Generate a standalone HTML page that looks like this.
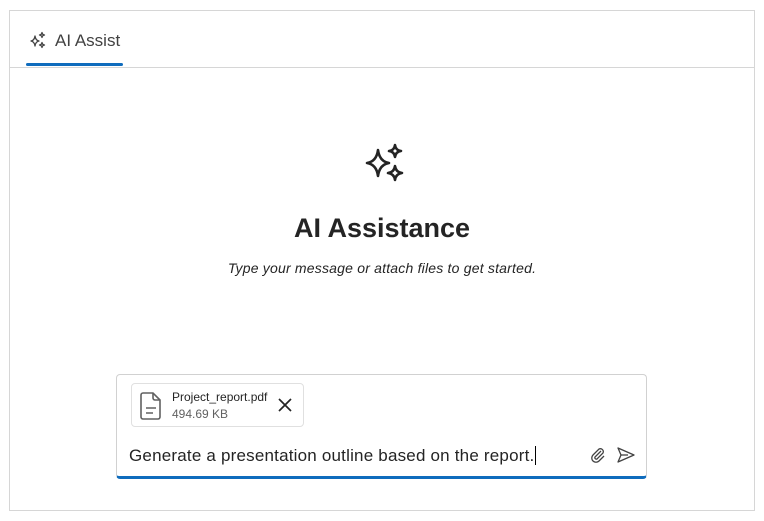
<!DOCTYPE html>
<html><head><style>
body{margin:0;width:764px;height:521px;background:#fff;font-family:"Liberation Sans",sans-serif;position:relative;overflow:hidden;color:#212121}
.frame{position:absolute;left:9px;top:10px;width:744px;height:499px;border:1px solid #d6d6d6}
.hdr{position:absolute;left:0;top:0;right:0;height:56px;border-bottom:1px solid #d6d6d6}
.tab{position:absolute;left:18px;top:20px;font-size:17px;color:#424242;display:flex;align-items:center;gap:7px}
.ul{position:absolute;left:16px;top:52px;width:97px;height:3px;background:#0f6cbd;border-radius:2px}
.title{position:absolute;left:0;right:0;top:213px;text-align:center;font-size:27px;font-weight:bold;color:#242424}
.sub{position:absolute;left:0;right:0;top:260px;text-align:center;font-size:14px;font-style:italic;color:#242424;letter-spacing:0.2px}
.box{position:absolute;left:116px;top:374px;width:529px;height:101px;border:1px solid #d1d1d1;border-bottom:3px solid #0f6cbd;border-radius:4px}
.chip{position:absolute;left:14px;top:8px;width:171px;height:42px;border:1px solid #e0e0e0;border-radius:4px}
.fn{position:absolute;left:40px;top:6px;font-size:12px;color:#242424}
.fs{position:absolute;left:40px;top:23px;font-size:12px;color:#616161}
.txt{position:absolute;left:12px;top:71px;font-size:17px;color:#242424;letter-spacing:0.2px}
</style></head><body>
<div class="frame">
 <div class="hdr">
  <div class="tab"><svg width="20" height="20" viewBox="0 0 20 20" fill="none" stroke="#424242" stroke-width="1.3" stroke-linejoin="round"><path d="M7 5 Q7.6 9.4 11 10 Q7.6 10.6 7 15 Q6.4 10.6 3 10 Q6.4 9.4 7 5Z"/><path d="M14 1.5 Q14.3 3.7 16.5 4 Q14.3 4.3 14 6.5 Q13.7 4.3 11.5 4 Q13.7 3.7 14 1.5Z"/><path d="M14 11.5 Q14.3 13.7 16.5 14 Q14.3 14.3 14 16.5 Q13.7 14.3 11.5 14 Q13.7 13.7 14 11.5Z"/></svg>AI Assist</div>
  <div class="ul"></div>
 </div>
</div>
<svg style="position:absolute;left:362px;top:142px" width="44" height="44" viewBox="0 0 44 44" fill="none" stroke="#242424" stroke-width="2.6" stroke-linejoin="round"><path d="M16 8 Q17.5 19.5 27 21 Q17.5 22.5 16 34 Q14.5 22.5 5 21 Q14.5 19.5 16 8Z"/><path d="M33 3 Q33.7 8.3 39 9 Q33.7 9.7 33 15 Q32.3 9.7 27 9 Q32.3 8.3 33 3Z"/><path d="M33 24 Q33.8 30.2 40 31 Q33.8 31.8 33 38 Q32.2 31.8 26 31 Q32.2 30.2 33 24Z"/></svg>
<div class="title">AI Assistance</div>
<div class="sub">Type your message or attach files to get started.</div>
<div class="box">
 <div class="chip">
  <svg style="position:absolute;left:7px;top:7px" width="24" height="30" viewBox="0 0 24 30" fill="none" stroke="#616161" stroke-width="1.6"><path d="M4 2h10l7 7v17a2 2 0 0 1-2 2H4a2 2 0 0 1-2-2V4a2 2 0 0 1 2-2z"/><path d="M14 2v5a2 2 0 0 0 2 2h5"/><path d="M7 17h10M7 22h7"/></svg>
  <div class="fn">Project_report.pdf</div>
  <div class="fs">494.69 KB</div>
  <svg style="position:absolute;left:146px;top:14px" width="14" height="14" viewBox="0 0 14 14" stroke="#242424" stroke-width="1.7"><path d="M1 1L13 13M13 1L1 13"/></svg>
 </div>
 <div class="txt">Generate a presentation outline based on the report.<span style="border-left:1px solid #000;margin-left:1px"></span></div>
 <svg style="position:absolute;left:473px;top:72px" width="16" height="16" viewBox="0 0 16 16" fill="none" stroke="#424242" stroke-width="1.3"><path d="M11 4L5 10a1.5 1.5 0 0 0 2 2l6-6a3 3 0 0 0-4-4L3 8a4.2 4.2 0 0 0 6 6l5-5"/></svg>
 <svg style="position:absolute;left:499px;top:71px" width="20" height="18" viewBox="0 0 20 18" fill="none" stroke="#424242" stroke-width="1.3" stroke-linejoin="round"><path d="M2 2L18 9L2 16L5 9Z"/><path d="M5 9H12"/></svg>
</div>
</body></html>
